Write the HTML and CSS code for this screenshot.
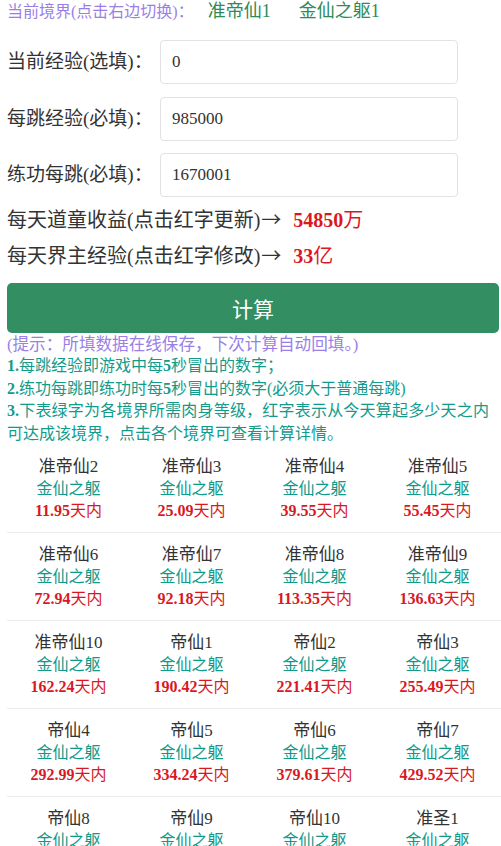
FILE: index.html
```html
<!DOCTYPE html>
<html lang="zh-CN">
<head>
<meta charset="utf-8">
<title>境界计算</title>
<link rel="stylesheet" href="styles.css">
</head>
<body>
<div class="realm">
  <span class="realm-label">当前境界(点击右边切换)：</span>
  <span class="realm-val">准帝仙1</span>
  <span class="realm-val realm-body">金仙之躯1</span>
</div>

<div class="form">
  <div class="form-row">
    <label class="form-label">当前经验(选填)：</label>
    <input class="form-input" type="text" value="0">
  </div>
  <div class="form-row">
    <label class="form-label">每跳经验(必填)：</label>
    <input class="form-input" type="text" value="985000">
  </div>
  <div class="form-row">
    <label class="form-label">练功每跳(必填)：</label>
    <input class="form-input" type="text" value="1670001">
  </div>
</div>

<div class="stats">
  <div class="stat">每天道童收益(点击红字更新)<span class="arrow">→</span><span class="stat-val"><b>54850</b>万</span></div>
  <div class="stat">每天界主经验(点击红字修改)<span class="arrow">→</span><span class="stat-val"><b>33</b>亿</span></div>
</div>

<button class="calc-btn" type="button">计算</button>

<div class="hint">(提示：所填数据在线保存，下次计算自动回填。)</div>
<div class="notes">
  <div><b>1.</b>每跳经验即游戏中每<b>5</b>秒冒出的数字；</div>
  <div><b>2.</b>练功每跳即练功时每<b>5</b>秒冒出的数字(必须大于普通每跳)</div>
  <div><b>3.</b>下表绿字为各境界所需肉身等级，红字表示从今天算起多少天之内可达成该境界，点击各个境界可查看计算详情。</div>
</div>

<div class="table">
  <div class="trow">
    <div class="cell"><div class="c-name">准帝仙2</div><div class="c-body">金仙之躯</div><div class="c-days"><b>11.95</b>天内</div></div>
    <div class="cell"><div class="c-name">准帝仙3</div><div class="c-body">金仙之躯</div><div class="c-days"><b>25.09</b>天内</div></div>
    <div class="cell"><div class="c-name">准帝仙4</div><div class="c-body">金仙之躯</div><div class="c-days"><b>39.55</b>天内</div></div>
    <div class="cell"><div class="c-name">准帝仙5</div><div class="c-body">金仙之躯</div><div class="c-days"><b>55.45</b>天内</div></div>
  </div>
  <div class="trow">
    <div class="cell"><div class="c-name">准帝仙6</div><div class="c-body">金仙之躯</div><div class="c-days"><b>72.94</b>天内</div></div>
    <div class="cell"><div class="c-name">准帝仙7</div><div class="c-body">金仙之躯</div><div class="c-days"><b>92.18</b>天内</div></div>
    <div class="cell"><div class="c-name">准帝仙8</div><div class="c-body">金仙之躯</div><div class="c-days"><b>113.35</b>天内</div></div>
    <div class="cell"><div class="c-name">准帝仙9</div><div class="c-body">金仙之躯</div><div class="c-days"><b>136.63</b>天内</div></div>
  </div>
  <div class="trow">
    <div class="cell"><div class="c-name">准帝仙10</div><div class="c-body">金仙之躯</div><div class="c-days"><b>162.24</b>天内</div></div>
    <div class="cell"><div class="c-name">帝仙1</div><div class="c-body">金仙之躯</div><div class="c-days"><b>190.42</b>天内</div></div>
    <div class="cell"><div class="c-name">帝仙2</div><div class="c-body">金仙之躯</div><div class="c-days"><b>221.41</b>天内</div></div>
    <div class="cell"><div class="c-name">帝仙3</div><div class="c-body">金仙之躯</div><div class="c-days"><b>255.49</b>天内</div></div>
  </div>
  <div class="trow">
    <div class="cell"><div class="c-name">帝仙4</div><div class="c-body">金仙之躯</div><div class="c-days"><b>292.99</b>天内</div></div>
    <div class="cell"><div class="c-name">帝仙5</div><div class="c-body">金仙之躯</div><div class="c-days"><b>334.24</b>天内</div></div>
    <div class="cell"><div class="c-name">帝仙6</div><div class="c-body">金仙之躯</div><div class="c-days"><b>379.61</b>天内</div></div>
    <div class="cell"><div class="c-name">帝仙7</div><div class="c-body">金仙之躯</div><div class="c-days"><b>429.52</b>天内</div></div>
  </div>
  <div class="trow">
    <div class="cell"><div class="c-name">帝仙8</div><div class="c-body">金仙之躯</div><div class="c-days"><b>477.42</b>天内</div></div>
    <div class="cell"><div class="c-name">帝仙9</div><div class="c-body">金仙之躯</div><div class="c-days"><b>528.10</b>天内</div></div>
    <div class="cell"><div class="c-name">帝仙10</div><div class="c-body">金仙之躯</div><div class="c-days"><b>581.76</b>天内</div></div>
    <div class="cell"><div class="c-name">准圣1</div><div class="c-body">金仙之躯</div><div class="c-days"><b>638.60</b>天内</div></div>
  </div>
</div>
</body>
</html>
```

FILE: styles.css
```css
html, body {
  background: #fff;
}
body {
  margin: 0;
  padding: 0 2px 0 7px;
  font-family: "Liberation Serif", "Noto Sans CJK SC", serif;
  color: #333;
  overflow: hidden;
}

.realm {
  height: 22px;
  line-height: 22px;
  white-space: nowrap;
}
.realm-label {
  color: #9a7fe6;
  font-size: 16px;
}
.realm-val {
  color: #2e8b57;
  font-size: 18px;
  margin-left: 10px;
}
.realm-body {
  margin-left: 24px;
}

.form {
  margin-top: 18px;
  display: flex;
  flex-direction: column;
  gap: 12.5px;
}
.form-row {
  display: flex;
  align-items: center;
}
.form-label {
  width: 153px;
  font-size: 19px;
  line-height: 24px;
  color: #333;
  white-space: nowrap;
}
.form-input {
  box-sizing: border-box;
  width: 298px;
  height: 44px;
  border: 1px solid #e2e2e2;
  border-radius: 4px;
  padding: 0 11px;
  font-family: "Liberation Serif", "Noto Sans CJK SC", serif;
  font-size: 17px;
  color: #333;
  background: #fff;
  outline: none;
}

.stats {
  margin-top: 5px;
}
.stat {
  height: 36px;
  font-size: 20px;
  line-height: 36px;
  color: #333;
  white-space: nowrap;
}
.arrow {
  font-family: "Noto Sans CJK SC", sans-serif;
  line-height: 20px;
  margin-left: 1px;
}
.stat-val {
  color: #d9191f;
  margin-left: 12px;
}
.stat-val b {
  font-weight: bold;
}

.calc-btn {
  display: block;
  width: 100%;
  height: 50px;
  margin-top: 9px;
  border: 0;
  border-radius: 5px;
  background: #338f62;
  color: #fff;
  font-family: "Liberation Serif", "Noto Sans CJK SC", serif;
  font-size: 21px;
  cursor: pointer;
}

.hint {
  color: #9a7fe6;
  font-size: 16.6px;
  line-height: 21px;
  height: 21px;
  margin-top: 1px;
  white-space: nowrap;
}
.notes {
  color: #129b8b;
  font-size: 16px;
  line-height: 22.5px;
  padding-right: 10px;
  text-align: justify;
}
.notes b {
  font-weight: bold;
}

.table {
  margin-right: -2px;
}
.trow {
  display: grid;
  grid-template-columns: repeat(4, 123px);
  border-bottom: 1px solid #ececec;
}
.cell {
  padding: 11px 0 10px;
  text-align: center;
  line-height: 22px;
  white-space: nowrap;
}
.c-name {
  font-size: 17px;
  color: #333;
}
.c-body {
  font-size: 16px;
  color: #0e9a8a;
}
.c-days {
  font-size: 16px;
  color: #d9191f;
}
.c-days b {
  font-weight: bold;
}
```
